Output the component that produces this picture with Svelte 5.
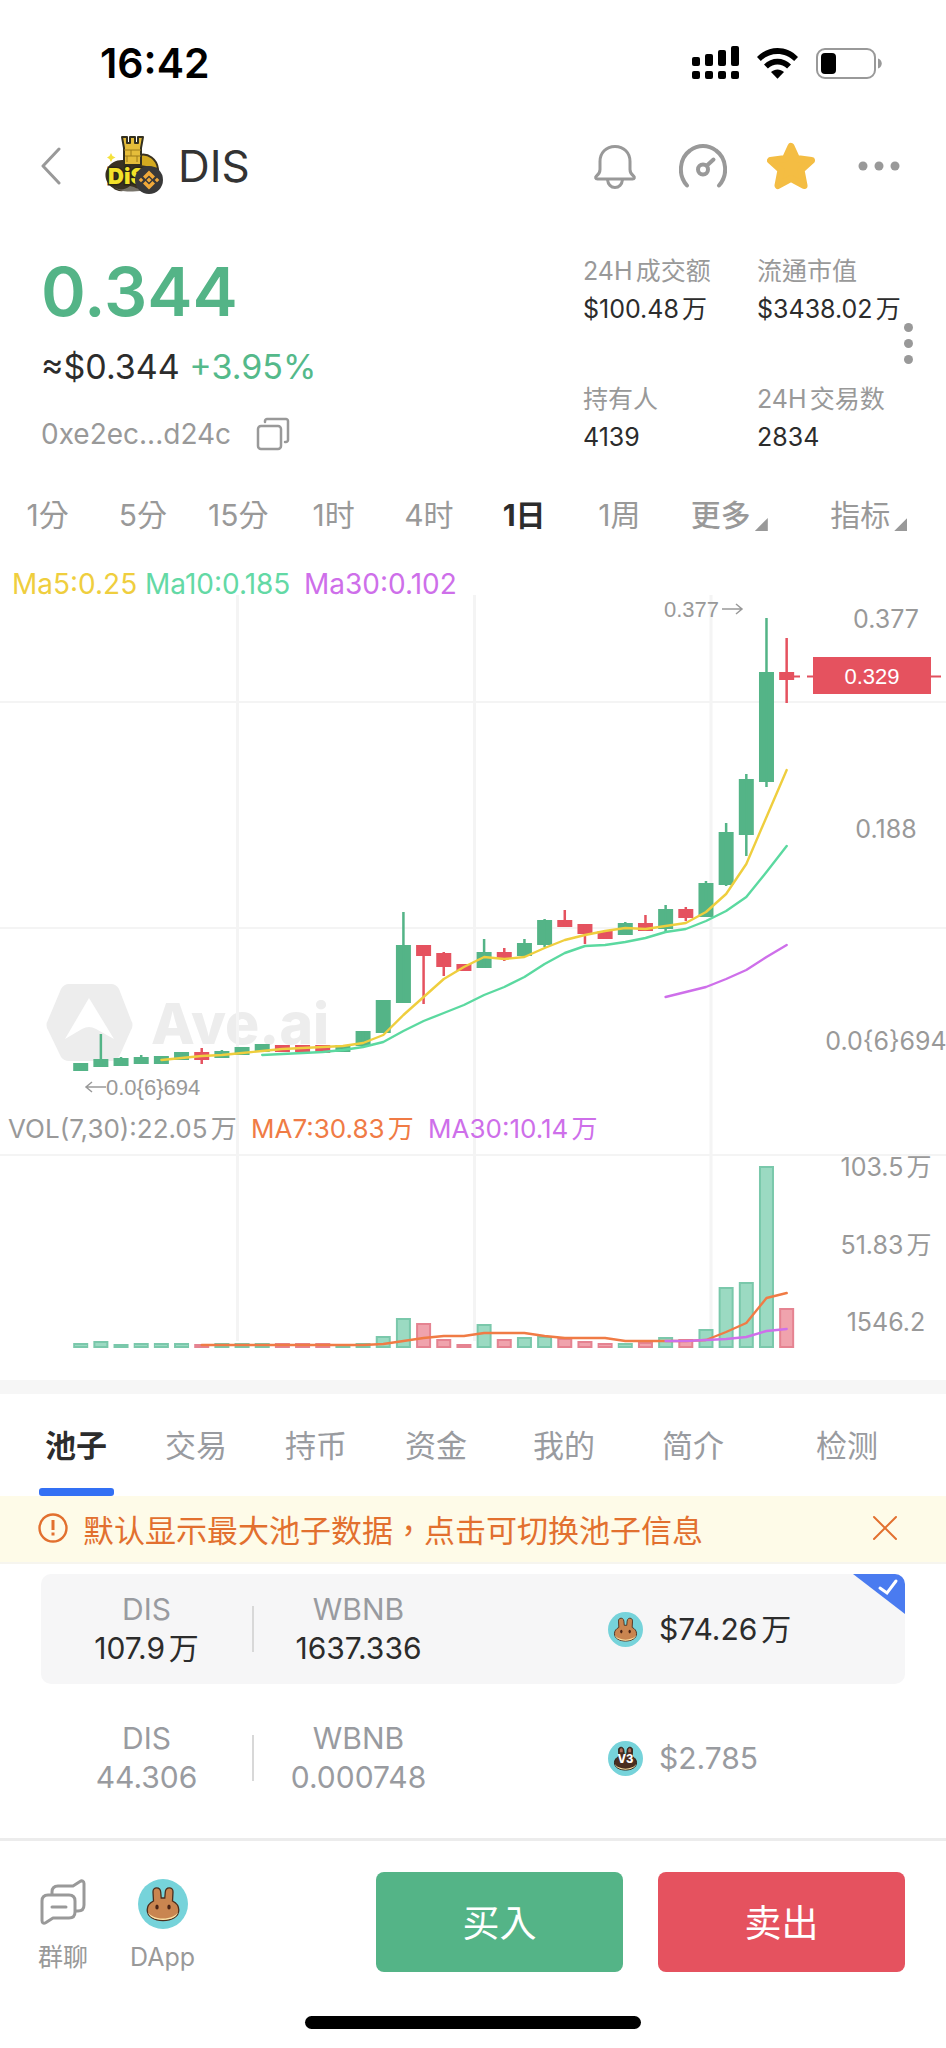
<script>
  let interval = $state('1日');
  let tab = $state('池子');
  let pool = $state(0);
  let showNotice = $state(true);

  const intervals = ['1分', '5分', '15分', '1时', '4时', '1日', '1周'];
  const tabs = ['池子', '交易', '持币', '资金', '我的', '简介', '检测'];

  const stats = [
    { label: '24H成交额', value: '$100.48万' },
    { label: '流通市值', value: '$3438.02万' },
    { label: '持有人', value: '4139' },
    { label: '24H交易数', value: '2834' }
  ];

  const pools = [
    { base: '107.9万', quote: '1637.336', value: '$74.26万', v3: false },
    { base: '44.306', quote: '0.000748', value: '$2.785', v3: true }
  ];

  // up, body top, body bottom, wick top, wick bottom, volume top
  const candles = [
    [1, 1063, 1071, 1063, 1071, 1343],
    [1, 1059, 1067, 1034, 1067, 1341],
    [1, 1058, 1066, 1057, 1066, 1344],
    [1, 1057, 1064, 1055, 1064, 1343],
    [1, 1056, 1064, 1056, 1064, 1343],
    [1, 1052, 1060, 1052, 1060, 1343],
    [0, 1052, 1060, 1048, 1064, 1344],
    [1, 1051, 1058, 1050, 1058, 1343],
    [1, 1047, 1055, 1047, 1055, 1343],
    [1, 1044, 1052, 1044, 1052, 1343],
    [0, 1045, 1052, 1045, 1052, 1343],
    [0, 1045, 1052, 1045, 1052, 1343],
    [0, 1045, 1053, 1045, 1053, 1343],
    [1, 1045, 1052, 1045, 1052, 1344],
    [1, 1031, 1046, 1031, 1046, 1343],
    [1, 1000, 1033, 1000, 1033, 1336],
    [1, 945, 1003, 912, 1003, 1318],
    [0, 945, 956, 945, 1004, 1323],
    [0, 953, 967, 952, 976, 1339],
    [0, 964, 971, 964, 971, 1344],
    [1, 952, 968, 939, 968, 1324],
    [0, 952, 959, 948, 961, 1339],
    [1, 943, 956, 939, 956, 1337],
    [1, 920, 945, 919, 947, 1336],
    [0, 920, 927, 910, 927, 1338],
    [0, 924, 934, 924, 944, 1341],
    [0, 931, 939, 931, 939, 1343],
    [1, 923, 935, 922, 935, 1343],
    [0, 923, 931, 915, 931, 1342],
    [1, 909, 929, 905, 932, 1337],
    [0, 909, 918, 907, 921, 1339],
    [1, 883, 917, 881, 917, 1329],
    [1, 832, 885, 823, 886, 1287],
    [1, 779, 835, 774, 856, 1282],
    [1, 672, 782, 618, 787, 1166],
    [0, 672, 680, 638, 703, 1308]
  ];

  const ma5 = [1060, 1058, 1056, 1055, 1053, 1051, 1049, 1048, 1047, 1046, 1043, 1035, 1015, 997, 979, 967, 957, 959, 957, 948, 940, 935, 931, 928, 929, 926, 923, 912, 894, 864, 817, 770];
  const ma10 = [1055, 1054, 1053, 1052, 1050, 1047, 1042, 1031, 1021, 1013, 1005, 995, 987, 977, 964, 953, 946, 945, 942, 938, 932, 929, 921, 911, 897, 872, 846];
  const ma30 = [997, 992, 987, 979, 970, 957, 945];
  const vol7 = [1345, 1345, 1345, 1345, 1345, 1345, 1345, 1345, 1345, 1344, 1341, 1338, 1336, 1336, 1333, 1333, 1333, 1336, 1338, 1338, 1338, 1341, 1341, 1341, 1341, 1340, 1332, 1323, 1298, 1293];
  const vol30 = [1341, 1341, 1340, 1339, 1337, 1331, 1329];

  const cx = (i) => 80.7 + i * 20.17;

  // every average ends on the last candle
  function line(values) {
    const start = candles.length - values.length;
    return values.map((y, i) => `${cx(start + i).toFixed(1)},${y}`).join(' ');
  }
</script>

{#snippet bunny(v3)}
  <svg class="bunny" viewBox="0 0 50 50" aria-hidden="true">
    <circle cx="25" cy="25" r="25" fill="#76d3da" />
    <g fill={v3 ? '#4a2e20' : '#c98550'} stroke={v3 ? '#2a1a12' : '#4b2d1c'} stroke-width="1.3">
      <path d="M15.500 22 15 13c-.3-5.500 7.300-5.500 7.700 0l.5 6h3.600l.5-6c.4-5.500 8-5.500 7.700 0l-.5 9c4 2 6.300 5 6.300 9 0 6.500-7 10.500-15.800 10.500S9.200 37.500 9.200 31c0-4 2.300-7 6.300-9z" />
    </g>
    <path d="M10 33c2 4 8 6.500 15 6.500S38 37 40 33c-.6 5-7 7.900-15 7.900S10.600 38 10 33z" fill="#fbe3a6" />
    {#if v3}
      <path d="M17 12c1-2 3-2 4 0v4h-4zM29 12c1-2 3-2 4 0v4h-4z" fill="#b06a55" />
      <text x="25" y="31" text-anchor="middle" font-size="16" font-weight="800" fill="#fff">V3</text>
    {:else}
      <ellipse cx="19" cy="28" rx="1.700" ry="2.600" fill="#4b2416" />
      <ellipse cx="31" cy="28" rx="1.700" ry="2.600" fill="#4b2416" />
    {/if}
  </svg>
{/snippet}

<div class="page">
  <div class="status-bar">
    <span class="clock">16:42</span>
    <div class="status-icons">
      <svg width="47" height="34" viewBox="0 0 47 34">
        <rect x="0" y="11" width="8" height="9" rx="2" />
        <rect x="13" y="8" width="8" height="12" rx="2" />
        <rect x="26" y="4" width="8" height="16" rx="2" />
        <rect x="39" y="0" width="8" height="20" rx="2" />
        <rect x="0" y="25" width="8" height="8" rx="2" />
        <rect x="13" y="25" width="8" height="8" rx="2" />
        <rect x="26" y="25" width="8" height="8" rx="2" />
        <rect x="39" y="25" width="8" height="8" rx="2" />
      </svg>
      <svg width="41" height="31" viewBox="0 0 41 31">
        <path d="M0 9C11-3 30-3 41 9l-3.800 4C28 3.500 13 3.500 3.800 13z" />
        <path d="M7 16.500c7.500-7.800 19.500-7.800 27 0l-3.900 4c-5.500-5.300-13.700-5.300-19.200 0z" />
        <path d="M14 24c3.800-3.400 9.200-3.400 13 0l-6.500 6.700z" />
      </svg>
      <svg width="66" height="31" viewBox="0 0 66 31">
        <rect x="1" y="1" width="58" height="29" rx="8" fill="none" stroke="#999" stroke-width="2" />
        <rect x="5" y="5" width="15" height="21" rx="4" />
        <path d="M62 10.500c5 1.500 5 8.500 0 10z" fill="#999" />
      </svg>
    </div>
  </div>

  <header class="nav">
    <button class="back" aria-label="返回">
      <svg width="20" height="38" viewBox="0 0 20 38" fill="none" stroke="#999" stroke-width="3" stroke-linecap="round" stroke-linejoin="round">
        <path d="M18 2 2 19l16 17" />
      </svg>
    </button>
    <svg class="coin" viewBox="0 0 58 60" aria-hidden="true">
      <path d="M2 33c3-6 9-9 15-9h20c10 0 18 7 17 17-1 9-9 12-15 12-4 2-11 2-15 0-5 3-12 3-16-1C0 47-1 38 2 33z" fill="#3a3222" />
      <path d="M35 19c8-2 17 4 18 14l-18-3z" fill="#d4aa20" stroke="#3a3222" stroke-width="2" />
      <path d="M17 1h5v6h3V1h5v6h3V1h5l-2 11v17H19V12z" fill="#e5bd3a" stroke="#33301f" stroke-width="2" stroke-linejoin="round" />
      <path d="M19 14h17M20 20h16M26 14v6M32 20v6M22 20v6" stroke="#9c7a18" stroke-width="1" />
      <path d="M6 17l1.500 3 3 1.500-3 1.500L6 26l-1.500-3L2 21.500 4.500 20z" fill="#f5e23c" />
      <path d="M8 50c5 5 12 4 17 0l4 1c3 2 6 2 9 0v4c-10 0-22 3-30-5z" fill="#77736a" />
      <text class="coin-text" x="3" y="48">DiS</text>
      <circle cx="44" cy="44" r="14" fill="#393939" />
      <g fill="#f0a93a">
        <path d="M44 34.500l6 6-2.500 2.500-3.500-3.500-3.500 3.500-2.500-2.500z" />
        <path d="M44 53.500l6-6-2.500-2.500-3.500 3.500-3.500-3.500-2.500 2.500z" />
        <path d="M44 41.500l2.500 2.500-2.500 2.500-2.500-2.500zM36 41.700l2.300 2.300-2.300 2.300-2.300-2.300zM52 41.700l2.300 2.300-2.300 2.300-2.300-2.300z" />
      </g>
    </svg>
    <h1>DIS</h1>
    <div class="nav-actions">
      <button aria-label="提醒">
        <svg width="48" height="48" viewBox="0 0 48 48" fill="none" stroke="#999" stroke-width="3" stroke-linejoin="round">
          <path d="M24 4.500c-9 0-15 6.500-15 15v8c0 3-1.500 5-3.500 6.500-1.500 1.300-1 3 1 3h35c2 0 2.500-1.700 1-3-2-1.500-3.500-3.500-3.500-6.500v-8c0-8.500-6-15-15-15z" />
          <path d="M16.500 37.500c.5 5 3.500 8 7.500 8s7-3 7.500-8" />
        </svg>
      </button>
      <button aria-label="行情">
        <svg width="48" height="48" viewBox="0 0 48 48" fill="none" stroke="#999" stroke-width="4" stroke-linecap="round">
          <path d="M8 43.500C-1.500 33 .5 16 11 8.500c8-6 18-6 26 0C47.500 16 49.500 33 40 43.500" />
          <circle cx="24" cy="27.500" r="5" />
          <path d="M28 23.500 34.500 17.500" />
        </svg>
      </button>
      <button aria-label="收藏">
        <svg width="48" height="48" viewBox="0 0 48 48" fill="#f4bd43" stroke="#f4bd43" stroke-width="7" stroke-linejoin="round">
          <path d="M24 4.500l5.500 12 15 2-10.500 9.500 3 15.500-13-7-13 7 3-15.500L3.500 18.500l15-2z" />
        </svg>
      </button>
      <button aria-label="更多">
        <svg width="48" height="48" viewBox="0 0 48 48" fill="#999">
          <circle cx="8" cy="24" r="4.500" />
          <circle cx="24" cy="24" r="4.500" />
          <circle cx="40" cy="24" r="4.500" />
        </svg>
      </button>
    </div>
  </header>

  <section class="summary">
    <div class="price-block">
      <div class="price">0.344</div>
      <div class="sub-price">≈$0.344 <span class="up">+3.95%</span></div>
      <div class="address">
        <span>0xe2ec...d24c</span>
        <button aria-label="复制">
          <svg width="34" height="34" viewBox="0 0 34 34" fill="none" stroke="#999" stroke-width="2.500" stroke-linecap="round">
            <rect x="2" y="9" width="23" height="23" rx="3" />
            <path d="M9 5V4c0-1 1-2 2-2h19c1 0 2 1 2 2v19c0 1-1 2-2 2h-1" />
          </svg>
        </button>
      </div>
    </div>
    <dl class="stats">
      {#each stats as s}
        <div>
          <dt>{s.label}</dt>
          <dd>{s.value}</dd>
        </div>
      {/each}
    </dl>
    <button class="dots" aria-label="更多数据"><i></i><i></i><i></i></button>
  </section>

  <nav class="intervals">
    {#each intervals as name}
      <button class:active={interval === name} onclick={() => (interval = name)}>{name}</button>
    {/each}
    <button class="menu strong">更多<i></i></button>
    <button class="menu">指标<i></i></button>
  </nav>

  <svg class="chart" viewBox="0 545 946 835" role="img" aria-label="DIS 1日 K线">
    <g fill="#ededed">
      <path d="M69 984h42q5 0 8 5l12 31q3 5 0 10l-12 27q-3 4-8 4H69q-5 0-8-4l-13-27q-3-5 0-10l13-31q3-5 8-5z" />
      <path d="M89 998l25 41-18-10q-7-4-14 0l-17 10z" fill="#fff" />
      <text class="watermark" x="151" y="1044">Ave.ai</text>
    </g>

    <g stroke="#f4f4f4" stroke-width="3">
      <path d="M237.500 595v746M474.500 595v746M711 595v746" />
      <path d="M0 702h946M0 928h946M0 1155h946" stroke-width="2" />
    </g>

    {#each candles as [up, top, bottom, high, low, vol], i}
      <g class={up ? 'bull' : 'bear'}>
        <rect x={cx(i) - 7.5} y={top} width="15" height={bottom - top} />
        <rect x={cx(i) - 1.25} y={high} width="2.500" height={low - high} />
        <rect class="vol" x={cx(i) - 6.5} y={vol + 1} width="13" height={1346 - vol} />
      </g>
    {/each}

    <g fill="none" stroke-width="2.400" stroke-linejoin="round" stroke-linecap="round">
      <polyline points={line(ma10)} stroke="#5bd9a0" />
      <polyline points={line(ma5)} stroke="#efce3e" />
      <polyline points={line(ma30)} stroke="#ce6fea" />
      <polyline points={line(vol7)} stroke="#f07b45" />
      <polyline points={line(vol30)} stroke="#ce6fea" />
    </g>

    <path d="M794 676.500h6M807 676.500h6M930 676.500h11" stroke="#e2505e" stroke-width="2" />
    <rect x="813" y="657" width="118" height="37" fill="#e5525f" />
    <text class="mark" x="872" y="684" text-anchor="middle" fill="#fff">0.329</text>
    <text class="mark" x="664" y="617">0.377</text>
    <text class="mark" x="106" y="1095">0.0&#123;6&#125;694</text>
    <path d="M722 609h20M736 604l6 5-6 5M106 1087H86M92 1082l-6 5 6 5" fill="none" stroke="#999" stroke-width="1.500" />

    <g class="legend">
      <text x="12" y="594" fill="#efce3e">Ma5:0.25</text>
      <text x="145" y="594" fill="#63d9a5">Ma10:0.185</text>
      <text x="304" y="594" fill="#ce6fea">Ma30:0.102</text>
    </g>
    <g class="axis vol-legend">
      <text x="8" y="1138">VOL(7,30):22.05万</text>
      <text x="251" y="1138" fill="#f07b45">MA7:30.83万</text>
      <text x="428" y="1138" fill="#ce6fea">MA30:10.14万</text>
    </g>
    <g class="axis" text-anchor="middle">
      <text x="886" y="628">0.377</text>
      <text x="886" y="838">0.188</text>
      <text x="886" y="1050">0.0&#123;6&#125;694</text>
      <text x="886" y="1176">103.5万</text>
      <text x="886" y="1254">51.83万</text>
      <text x="886" y="1331">1546.2</text>
    </g>
  </svg>

  <nav class="tabs">
    {#each tabs as name}
      <button class:active={tab === name} onclick={() => (tab = name)}>{name}</button>
    {/each}
  </nav>

  {#if showNotice}
    <div class="notice">
      <svg width="30" height="30" viewBox="0 0 30 30" fill="none" stroke="#e2702f" stroke-width="2.400">
        <circle cx="15" cy="15" r="13.500" />
        <path d="M15 7v10M15 19.500v3" stroke-width="3" />
      </svg>
      <span>默认显示最大池子数据，点击可切换池子信息</span>
      <button aria-label="关闭" onclick={() => (showNotice = false)}>
        <svg width="26" height="26" viewBox="0 0 26 26" fill="none" stroke="#e2702f" stroke-width="2" stroke-linecap="round">
          <path d="M2 2l22 22M24 2 2 24" />
        </svg>
      </button>
    </div>
  {/if}

  <div class="pools">
    {#each pools as p, i}
      <button class="pool" class:selected={pool === i} onclick={() => (pool = i)}>
        <span class="pair"><span class="sym">DIS</span><span>{p.base}</span></span>
        <span class="rule"></span>
        <span class="pair"><span class="sym">WBNB</span><span>{p.quote}</span></span>
        <span class="worth">{@render bunny(p.v3)}{p.value}</span>
        {#if pool === i}
          <svg class="corner" width="52" height="40" viewBox="0 0 52 40">
            <path d="M0 0h52v40z" fill="#4a7bf0" />
            <path d="M27 14l7 5 9-12" fill="none" stroke="#fff" stroke-width="3" stroke-linecap="round" />
          </svg>
        {/if}
      </button>
    {/each}
  </div>

  <footer>
    <div class="actions">
      <button class="link">
        <svg width="46" height="46" viewBox="0 0 46 46" fill="none" stroke="#999" stroke-width="3" stroke-linejoin="round" stroke-linecap="round">
          <path d="M8 16h21c4 0 6 2 6 6v11c0 4-2 6-6 6H13l-7 4.500c-2.500 1.500-4 .5-4-2V22c0-4 2-6 6-6z" />
          <path d="M12 15v-2c0-4 2-6 6-6h15l7-4.500c2-1.300 4-.4 4 2V26c0 4-2 6-6 6h-2" />
          <path d="M12 28h14" />
        </svg>
        群聊
      </button>
      <button class="link">{@render bunny(false)}DApp</button>
      <button class="trade buy">买入</button>
      <button class="trade sell">卖出</button>
    </div>
    <div class="home-indicator"></div>
  </footer>
</div>

<style>
  :global(body) {
    margin: 0;
    background: #fff;
  }

  .page {
    font-family: Inter, 'Noto Sans CJK TC', sans-serif;
    color: #2c2c2c;
    background: #fff;
  }

  .page *, .page *::before, .page *::after { box-sizing: border-box; }

  button {
    margin: 0;
    padding: 0;
    border: none;
    background: none;
    font: inherit;
    color: inherit;
    cursor: pointer;
  }

  svg { display: block; flex: none; }

  .status-bar {
    display: flex;
    align-items: center;
    justify-content: space-between;
    height: 126px;
    padding: 0 64px 0 100px;
  }

  .clock { font-size: 41px; font-weight: 600; color: #000; }

  .status-icons { display: flex; align-items: center; gap: 18px; }

  .nav {
    display: flex;
    align-items: center;
    height: 80px;
    padding: 0 43px 0 41px;
  }

  .coin { width: 58px; height: 60px; margin-left: 44px; }

  .coin-text {
    font-size: 22px;
    font-weight: 900;
    fill: #f3e129;
    stroke: #2b2616;
    stroke-width: 3px;
    paint-order: stroke;
  }

  h1 {
    margin: 0 0 0 15px;
    font-size: 44px;
    font-weight: 400;
    line-height: 60px;
    color: #333;
  }

  .nav-actions { display: flex; gap: 40px; margin-left: auto; }

  .summary {
    display: flex;
    align-items: flex-start;
    padding: 44px 33px 0 41px;
  }

  .price-block { flex: 1; }

  .price {
    font-size: 68px;
    font-weight: 600;
    line-height: 82px;
    color: #54b487;
  }

  .sub-price { margin-top: 11px; font-size: 34px; line-height: 48px; }
  .up { color: #54b98a; }

  .address {
    display: flex;
    align-items: center;
    gap: 25px;
    margin-top: 23px;
    font-size: 28px;
    line-height: 40px;
    color: #999;
  }

  .stats {
    display: grid;
    grid-template-columns: 174px 147px;
    row-gap: 52px;
    margin: 2px 0 0;
    font-size: 25px;
    line-height: 38px;
    white-space: nowrap;
    text-autospace: normal;
  }

  .stats dt { height: 38px; color: #999; }
  .stats dd { height: 38px; margin: 0; }

  .dots {
    display: flex;
    flex-direction: column;
    gap: 7px;
    margin-top: 73px;
  }

  .dots i { width: 9px; height: 9px; border-radius: 50%; background: #999; }

  .intervals {
    display: grid;
    grid-template-columns: repeat(7, 95fr) 124fr 154fr;
    height: 61px;
    margin-top: 28px;
    padding-bottom: 4px;
    font-size: 30px;
    color: #999;
  }

  .intervals .active { font-weight: 700; color: #2c2c2c; }
  .menu { display: flex; align-items: center; justify-content: center; gap: 4px; }
  .intervals .strong { font-weight: 500; }

  .menu i {
    width: 13px;
    height: 13px;
    margin-top: 24px;
    background: #999;
    clip-path: polygon(100% 0, 100% 100%, 0 100%);
  }

  .chart { width: 100%; height: auto; }
  .bull { fill: #54b487; }
  .bear { fill: #e5525f; }
  .bull .vol { fill: #9bdac2; stroke: #7ac8ab; stroke-width: 2px; }
  .bear .vol { fill: #f0a3ad; stroke: #e58391; stroke-width: 2px; }
  .mark { font-family: 'Liberation Sans', Arial, sans-serif; font-size: 22px; }
  .mark:not([fill]) { fill: #999; }
  .legend { font-size: 28px; }
  .axis { font-size: 25px; fill: #999; text-autospace: normal; }
  .vol-legend { font-size: 26px; }
  .watermark { font-size: 57px; font-weight: 800; }

  .tabs {
    display: grid;
    grid-template-columns: repeat(4, 120fr) 136fr 122fr 186fr;
    height: 116px;
    padding: 0 6px 0 16px;
    border-top: 14px solid #f6f6f6;
    font-size: 31px;
    color: #999ba0;
  }

  .tabs button { position: relative; padding-bottom: 4px; }
  .tabs .active { font-weight: 700; color: #2c2c2c; }

  .tabs .active::after {
    content: '';
    position: absolute;
    bottom: 0;
    left: 50%;
    width: 75px;
    height: 8px;
    margin-left: -37px;
    border-radius: 3px;
    background: #3370f4;
  }

  .notice {
    display: flex;
    align-items: center;
    height: 68px;
    padding: 0 48px 2px 38px;
    border-bottom: 2px solid #f6f5ef;
    background: #fefbe8;
    font-size: 31px;
    color: #e2702f;
  }

  .notice span { flex: 1; margin-left: 15px; }

  .pools {
    display: flex;
    flex-direction: column;
    gap: 19px;
    padding: 10px 41px 25px;
  }

  .pool {
    position: relative;
    display: grid;
    grid-template-columns: 211fr 2px 209fr 145fr 297fr;
    align-items: center;
    height: 110px;
    border-radius: 10px;
    overflow: hidden;
    font-size: 30px;
    line-height: 39px;
    color: #999ba0;
    text-autospace: normal;
  }

  .selected { background: #f6f6f7; color: #2c2c2c; }
  .pair { display: grid; grid-template-rows: 39px 39px; }
  .sym { color: #999ba0; }
  .rule { height: 46px; background: #d8d8d8; }
  .worth { grid-column: 5; display: flex; align-items: center; gap: 16px; }
  .worth .bunny { width: 35px; height: 35px; }
  .corner { position: absolute; top: 0; right: 0; }

  footer { border-top: 3px solid #ececec; padding: 31px 41px 18px; }
  .actions { display: flex; align-items: center; height: 100px; }

  .link {
    display: flex;
    flex-direction: column;
    align-items: center;
    gap: 10px;
    margin-top: 10px;
    font-size: 25px;
    line-height: 36px;
    color: #999;
  }

  .link:first-child { margin-left: -3px; }
  .link:first-child svg { margin-bottom: 4px; }
  .link + .link { margin-left: 42px; }
  .link .bunny { width: 50px; height: 50px; }

  .trade {
    flex: 0 0 247px;
    height: 100px;
    padding-bottom: 3px;
    border-radius: 8px;
    font-size: 37px;
    color: #fff;
  }

  .buy { margin-left: auto; background: #54b487; }
  .sell { margin-left: 35px; background: #e5525f; }

  .home-indicator {
    width: 336px;
    height: 13px;
    margin: 44px auto 0;
    border-radius: 7px;
    background: #000;
  }
</style>
